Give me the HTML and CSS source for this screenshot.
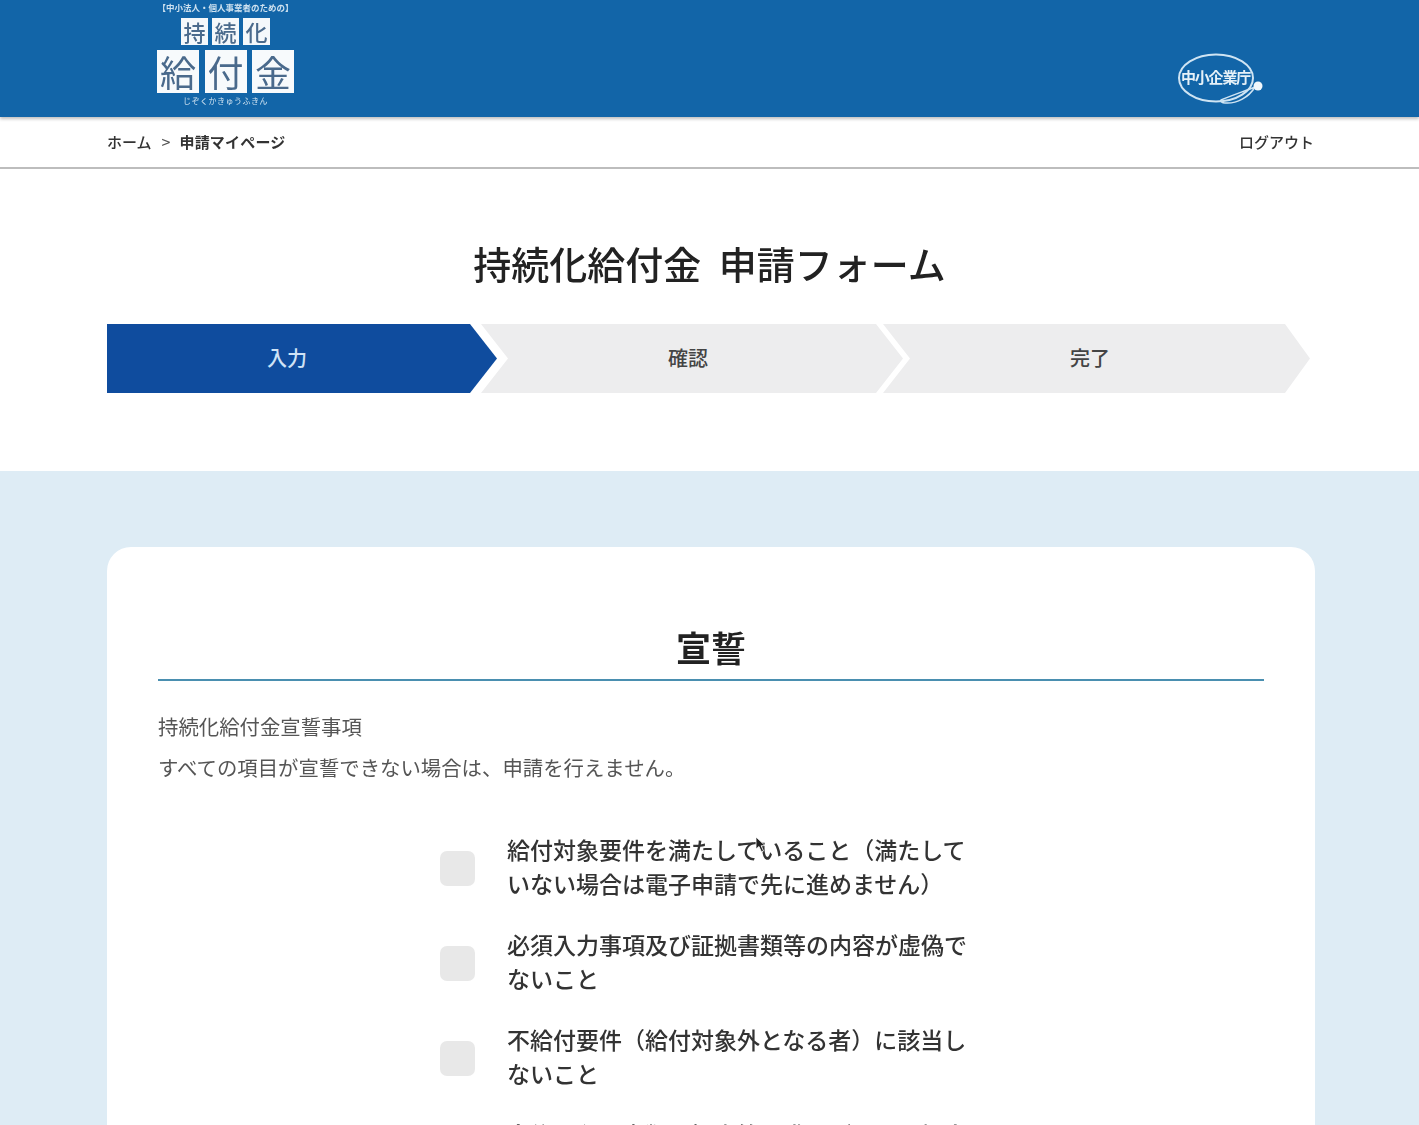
FILE: index.html
```html
<!DOCTYPE html>
<html lang="ja">
  <head>
    <meta charset="utf-8">
    <title>持続化給付金 申請フォーム</title>
    <link rel="stylesheet" href="styles.css">
  </head>
  <body>
    <header class="site-header">
      <div class="logo">
        <div class="logo-top">【中小法人・個人事業者のための】</div>
        <div class="logo-row">
          <span class="logo-small">持</span><span class="logo-small">続</span><span class="logo-small">化</span>
        </div>
        <div class="logo-row">
          <span class="logo-big">給</span><span class="logo-big">付</span><span class="logo-big">金</span>
        </div>
        <div class="logo-bottom">じぞくかきゅうふきん</div>
      </div>
      <div class="agency">
        <svg class="agency-ring" width="90" height="54" viewBox="0 0 90 54">
          <ellipse cx="39" cy="25" rx="37" ry="23.5" fill="none" stroke="#cfe4f3" stroke-width="2"/>
          <path d="M44 47 C56 42 68 38 78 34 C72 44 60 51 48 50 C45 50 43 48 44 47 Z" fill="none" stroke="#cfe4f3" stroke-width="1.5"/>
          <circle cx="81" cy="33" r="4.5" fill="#f2f8fc"/>
        </svg>
        <span class="agency-name">中小企業庁</span>
      </div>
    </header>

    <nav class="crumbs">
      <div class="crumbs-left">
        <span>ホーム</span><span class="crumb-sep">&gt;</span><span class="crumb-current">申請マイページ</span>
      </div>
      <span>ログアウト</span>
    </nav>

    <section class="intro">
      <h1 class="page-title">持続化給付金 申請フォーム</h1>
      <ol class="steps">
        <li class="step step-first">入力</li>
        <li class="step step-second">確認</li>
        <li class="step step-third">完了</li>
      </ol>
    </section>

    <main class="content">
      <div class="card">
        <h2 class="card-title">宣誓</h2>
        <p class="lead lead-first">持続化給付金宣誓事項</p>
        <p class="lead">すべての項目が宣誓できない場合は、申請を行えません。</p>
        <ul class="oath-list">
          <li class="oath"><span class="check"></span><span class="oath-text">給付対象要件を満たしていること（満たしていない場合は電子申請で先に進めません）</span></li>
          <li class="oath"><span class="check"></span><span class="oath-text">必須入力事項及び証拠書類等の内容が虚偽でないこと</span></li>
          <li class="oath"><span class="check"></span><span class="oath-text">不給付要件（給付対象外となる者）に該当しないこと</span></li>
          <li class="oath"><span class="check"></span><span class="oath-text">今後、必要書類の提出等の求めがあった場合は協力すること</span></li>
        </ul>
      </div>
    </main>

    <svg class="cursor" width="12" height="18" viewBox="0 0 12 18">
      <path d="M1 1 L1 13 L4 10.5 L6.5 16 L8.5 15 L6.2 9.8 L10 9.5 Z" fill="#222" stroke="#fff" stroke-width="0.8"/>
    </svg>
  </body>
</html>
```

FILE: styles.css
```css
html, body {
  margin: 0;
  height: 1125px;
  overflow: hidden;
}

body {
  position: relative;
  background: #ffffff;
  color: #222222;
  font-family: "Noto Sans CJK JP", "Noto Sans", sans-serif;
  filter: blur(0.5px);
}

.site-header {
  height: 117px;
  background: #1265a8;
  box-shadow: 0 2px 3px rgba(0, 0, 0, 0.25);
  display: flex;
  justify-content: space-between;
  padding: 0 154px 0 157px;
  box-sizing: border-box;
  position: relative;
}

.logo {
  width: 137px;
  padding-top: 2px;
  color: #4a6a8c;
  text-align: center;
}

.logo-top {
  font-size: 8.5px;
  line-height: 11px;
  font-weight: 700;
  color: #cfe2f0;
  white-space: nowrap;
}

.logo-bottom {
  font-size: 8px;
  line-height: 10px;
  margin-top: 3px;
  color: #cfe2f0;
  letter-spacing: 0.5px;
}

.logo-row {
  display: flex;
  justify-content: space-between;
  margin-top: 5px;
}

.logo-row:nth-child(2) {
  padding: 0 24px;
}

.logo-small {
  width: 27px;
  height: 27px;
  background: #f4f8fb;
  font-size: 22px;
  line-height: 27px;
  font-weight: 500;
}

.logo-big {
  width: 42px;
  height: 43px;
  background: #f7fafc;
  font-size: 36px;
  line-height: 43px;
}

.agency {
  position: relative;
  width: 88px;
  margin-top: 53px;
}

.agency-ring {
  display: block;
}

.agency-name {
  position: absolute;
  left: 4px;
  top: 13px;
  font-size: 15px;
  line-height: 22px;
  font-weight: 700;
  letter-spacing: -1.2px;
  color: #e6f1f8;
  white-space: nowrap;
}

.crumbs {
  height: 52px;
  box-sizing: border-box;
  border-bottom: 2px solid #bdbdbd;
  padding: 0 105px 2px 107px;
  display: flex;
  align-items: center;
  justify-content: space-between;
  font-size: 15px;
  font-weight: 500;
  color: #333333;
}

.crumbs-left {
  display: flex;
  align-items: center;
}

.crumb-sep {
  margin: 0 9px 0 10px;
  font-size: 16px;
  font-weight: 400;
  color: #555555;
}

.crumb-current {
  letter-spacing: 0.2px;
  font-weight: 700;
}

.intro {
  padding: 0 107px 78px;
  height: 302px;
  box-sizing: border-box;
}

.page-title {
  margin: 0;
  height: 155px;
  box-sizing: border-box;
  padding: 66px 0 0 0;
  text-align: center;
  font-size: 38px;
  line-height: 56px;
  font-weight: 500;
  word-spacing: 9px;
  color: #222222;
}

.steps {
  display: flex;
  margin: 0;
  padding: 0;
  list-style: none;
}

.step {
  height: 69px;
  box-sizing: border-box;
  padding-bottom: 3px;
  display: flex;
  align-items: center;
  justify-content: center;
  font-size: 20px;
  font-weight: 500;
  color: #444444;
  background: #ededee;
}

.step-first {
  width: 390px;
  padding-right: 30px;
  color: #cfe3f6;
  background: #0f4c9e;
  clip-path: polygon(0 0, 363px 0, 100% 50%, 363px 100%, 0 100%);
}

.step-second {
  width: 422px;
  margin-left: -16px;
  padding-right: 8px;
  clip-path: polygon(0 0, 395px 0, 100% 50%, 395px 100%, 0 100%, 27px 50%);
}

.step-third {
  width: 427px;
  margin-left: -20px;
  padding-right: 13px;
  clip-path: polygon(0 0, 402px 0, 100% 50%, 402px 100%, 0 100%, 27px 50%);
}

.content {
  background: #deecf5;
  padding: 76px 104px 0 107px;
  height: 654px;
  box-sizing: border-box;
}

.card {
  background: #ffffff;
  border-radius: 24px;
  padding: 0 51px;
  height: 700px;
}

.card-title {
  margin: 0;
  padding-top: 74px;
  padding-bottom: 6px;
  border-bottom: 2px solid #4a8fb0;
  text-align: center;
  font-size: 35px;
  line-height: 52px;
  font-weight: 700;
  color: #222222;
}

.lead {
  margin: 0;
  font-size: 20.4px;
  line-height: 41px;
  color: #555555;
}

.lead-first {
  margin-top: 25px;
}

.oath-list {
  margin: 44px 0 0;
  padding: 0 0 0 282px;
  list-style: none;
}

.oath {
  display: flex;
  align-items: center;
  gap: 32px;
  margin-bottom: 27px;
}

.check {
  flex: none;
  width: 35px;
  height: 35px;
  margin-top: 5px;
  border-radius: 7px;
  background: #e8e8e8;
}

.oath-text {
  width: 470px;
  font-size: 23px;
  line-height: 34px;
  font-weight: 500;
  color: #333333;
}

.cursor {
  position: absolute;
  left: 755px;
  top: 836px;
}
```
